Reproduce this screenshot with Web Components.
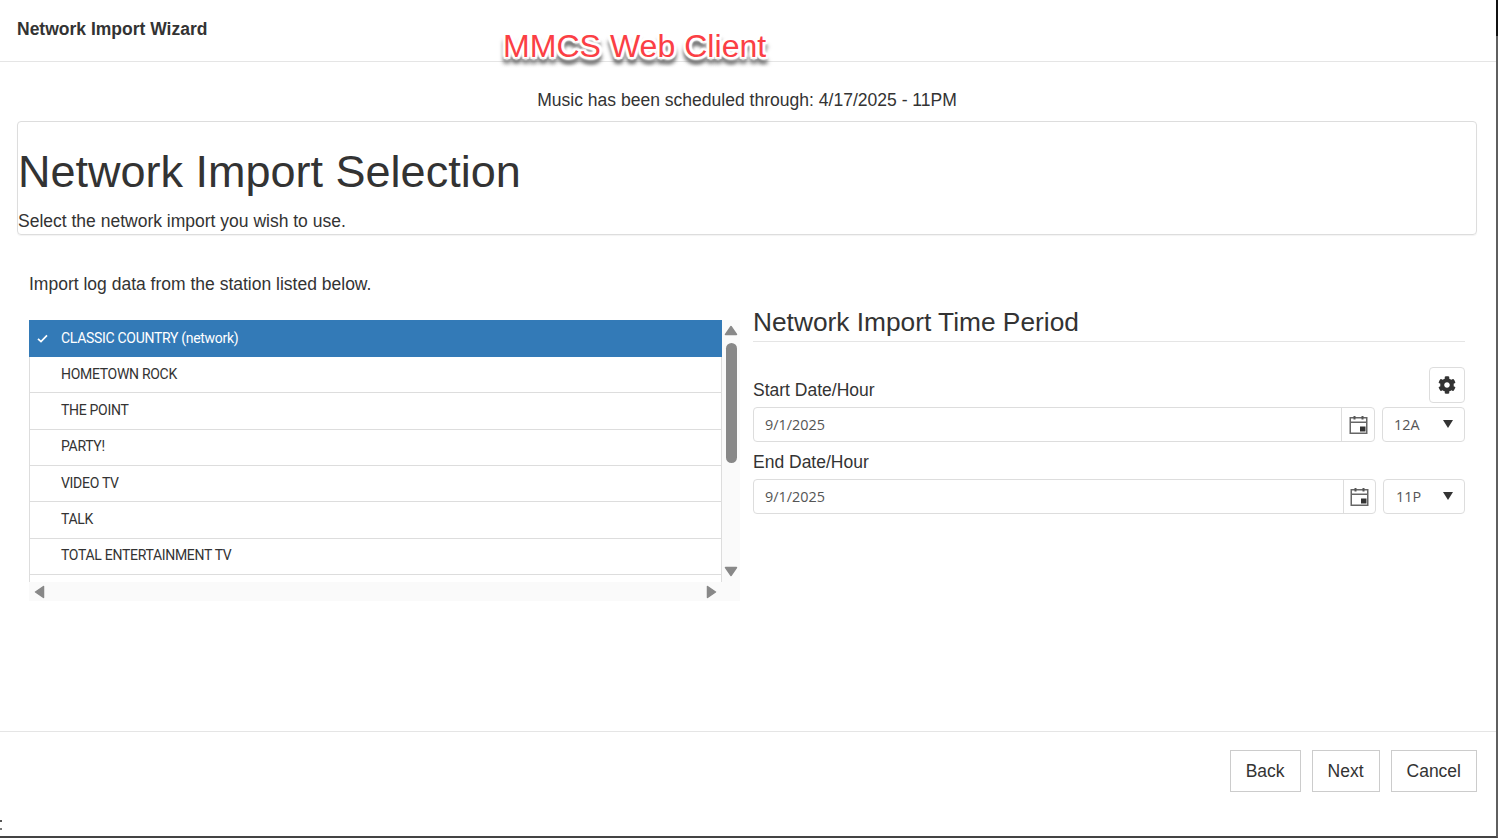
<!DOCTYPE html>
<html lang="en">
    <head>
        <meta charset="utf-8" />
        <title>Network Import Wizard</title>
        <style type="text/css">
            html,
            body {
                margin: 0;
                background: #fff;
                font-family: "Liberation Sans", Arial, sans-serif;
                color: #333;
            }
        </style>
    </head>
    <body>
        <import-wizard>
            <wizard-header slot="header" title-text="Network Import Wizard"></wizard-header>
            <span slot="status">Music has been scheduled through: 4/17/2025 - 11PM</span>
            <intro-card slot="intro" heading="Network Import Selection">Select the network import you wish to use.</intro-card>
            <station-panel slot="left" hint="Import log data from the station listed below.">
                <station-row selected>CLASSIC COUNTRY (network)</station-row>
                <station-row>HOMETOWN ROCK</station-row>
                <station-row>THE POINT</station-row>
                <station-row>PARTY!</station-row>
                <station-row>VIDEO TV</station-row>
                <station-row>TALK</station-row>
                <station-row>TOTAL ENTERTAINMENT TV</station-row>
                <station-row></station-row>
            </station-panel>
            <period-panel slot="right" heading="Network Import Time Period">
                <date-hour label="Start Date/Hour" date="9/1/2025" hour="12A" gear></date-hour>
                <date-hour label="End Date/Hour" date="9/1/2025" hour="11P" wide></date-hour>
            </period-panel>
            <wizard-button slot="footer">Back</wizard-button>
            <wizard-button slot="footer">Next</wizard-button>
            <wizard-button slot="footer">Cancel</wizard-button>
        </import-wizard>

        <script type="text/javascript">
            function shadow(el, html) {
                el.attachShadow({ mode: "open" }).innerHTML = html;
            }

            class ImportWizard extends HTMLElement {
                connectedCallback() {
                    shadow(this, `<style>
                        :host { display: flex; flex-direction: column; position: relative; box-sizing: border-box;
                            width: 1498px; height: 838px; background: #fff;
                            border-right: 2px solid #5f5f5f; border-bottom: 2px solid #444; }
                        .corner { position: absolute; top: 0; right: -2px; width: 2px; height: 36px; background: #111; }
                        .brand { position: absolute; left: 503px; top: 27px; font-size: 32.1px; line-height: 38px; color: #fb3f45;
                            white-space: nowrap;
                            text-shadow: 1px 0 1px #fff, -1px 0 1px #fff, 0 1px 1px #fff, 0 -1px 1px #fff, 2px 2px 1px #fff, -2px 2px 1px #fff, 2px -2px 1px #fff, -2px -2px 1px #fff, 3px 0 2px #fff, -3px 0 2px #fff, 0 3px 2px #fff, 0 -3px 2px #fff, 0 6px 4px #666, 2px 6px 4px #666, -2px 6px 4px #666; }
                        .status { height: 59px; box-sizing: border-box; padding: 0 2px 11px 0; display: flex; align-items: flex-end; justify-content: center; font-size: 17.55px; line-height: 20px; }
                        .body { flex: 1; padding: 0 19px 0 17px; }
                        .columns { display: grid; grid-template-columns: 711px 712px; column-gap: 13px; padding: 39px 0 0 12px; }
                        .foot { height: 105px; box-sizing: border-box; border-top: 1px solid #e5e5e5; padding: 18px 19px 0 0; display: flex; justify-content: flex-end; gap: 11px; align-items: flex-start; }
                        .dots { position: absolute; left: 0; top: 820px; width: 2px; height: 2px; background: #555; box-shadow: 0 8px 0 #777; }
                    </style>
                    <slot name="header"></slot>
                    <div class="status"><slot name="status"></slot></div>
                    <div class="body">
                        <slot name="intro"></slot>
                        <div class="columns"><slot name="left"></slot><slot name="right"></slot></div>
                    </div>
                    <div class="foot"><slot name="footer"></slot></div>
                    <div class="brand">MMCS Web Client</div>
                    <div class="corner"></div>
                    <div class="dots"></div>`);
                }
            }
            customElements.define("import-wizard", ImportWizard);

            class WizardHeader extends HTMLElement {
                connectedCallback() {
                    shadow(this, `<style>
                        :host { display: flex; align-items: center; box-sizing: border-box; height: 62px; padding: 0 17px 2px;
                            border-bottom: 1px solid #e5e5e5; font-size: 17.5px; font-weight: bold; color: #333; }
                    </style>${this.getAttribute("title-text")}`);
                }
            }
            customElements.define("wizard-header", WizardHeader);

            class IntroCard extends HTMLElement {
                connectedCallback() {
                    shadow(this, `<style>
                        :host { display: block; box-sizing: border-box; height: 114px; border: 1px solid #ddd; border-radius: 4px;
                            box-shadow: 0 1px 1px rgba(0,0,0,.05); }
                        h1 { margin: 22px 0 0; font-size: 45px; line-height: 56px; font-weight: normal; color: #333; }
                        p { margin: 11px 0 0; font-size: 17.5px; line-height: 20px; }
                    </style><h1>${this.getAttribute("heading")}</h1><p><slot></slot></p>`);
                }
            }
            customElements.define("intro-card", IntroCard);

            class StationPanel extends HTMLElement {
                connectedCallback() {
                    shadow(this, `<style>
                        :host { display: block; }
                        .hint { font-size: 17.5px; line-height: 20px; margin-bottom: 26px; }
                        .box { display: grid; grid-template-columns: 693px 18px; grid-template-rows: 262px 19px; background: #fafafa; }
                        .list { overflow: hidden; background: #fff; }
                        .vbar { display: flex; flex-direction: column; align-items: center; }
                        .hbar { grid-column: 1 / 3; display: flex; justify-content: space-between; align-items: center; padding: 0 23px 0 5px; }
                        svg { display: block; fill: #888; stroke: #888; stroke-width: 1.5; stroke-linejoin: round; }
                        .up { margin-top: 5px; }
                        .thumb { width: 11px; height: 120px; margin-top: 7px; border-radius: 6px; background: #888; }
                        .down { margin-top: 103px; }
                    </style>
                    <div class="hint">${this.getAttribute("hint")}</div>
                    <div class="box">
                        <div class="list"><slot></slot></div>
                        <div class="vbar">
                            <svg class="up" width="14" height="11" viewBox="0 0 14 11"><path d="M7 1.5 12.5 9.5H1.5z"/></svg>
                            <div class="thumb"></div>
                            <svg class="down" width="14" height="11" viewBox="0 0 14 11"><path d="M7 9.5 12.5 1.5H1.5z"/></svg>
                        </div>
                        <div class="hbar">
                            <svg width="11" height="14" viewBox="0 0 11 14"><path d="M1.5 7 9.5 1.5V12.5z"/></svg>
                            <svg width="11" height="14" viewBox="0 0 11 14"><path d="M9.5 7 1.5 1.5V12.5z"/></svg>
                        </div>
                    </div>`);
                }
            }
            customElements.define("station-panel", StationPanel);

            class StationRow extends HTMLElement {
                connectedCallback() {
                    const selected = this.hasAttribute("selected");
                    shadow(this, `<style>
                        :host { display: flex; align-items: center; box-sizing: border-box; height: 36.33px; padding-bottom: 2px;
                            font: 14px/20px Roboto, sans-serif; color: #333; border: 1px solid #ddd; border-width: 0 1px 1px; white-space: nowrap; letter-spacing: -.3px; }
                        :host([selected]) { height: 37px; background: #337ab7; color: #fff; border: 0; }
                        .tick { width: 31px; flex: none; padding: 2px 0 0 7px; box-sizing: border-box; }
                        :host([selected]) .tick { width: 32px; padding-left: 8px; }
                        svg { display: block; }
                    </style>
                    <div class="tick">${selected ? '<svg width="11" height="9" viewBox="0 0 11 9"><path d="M1 4.8 4 7.6 10 1.4" fill="none" stroke="#fff" stroke-width="1.7"/></svg>' : ""}</div>
                    <slot></slot>`);
                }
            }
            customElements.define("station-row", StationRow);

            class PeriodPanel extends HTMLElement {
                connectedCallback() {
                    shadow(this, `<style>
                        :host { display: block; }
                        h2 { margin: 0 0 25px; padding: 32px 0 3px; font-size: 26.3px; line-height: 32px; font-weight: normal; color: #333; border-bottom: 1px solid #e5e5e5; }
                    </style><h2>${this.getAttribute("heading")}</h2><slot></slot>`);
                }
            }
            customElements.define("period-panel", PeriodPanel);

            class DateHour extends HTMLElement {
                connectedCallback() {
                    const wide = this.hasAttribute("wide");
                    const gear = this.hasAttribute("gear");
                    const gearIcon = `<svg width="18" height="18" viewBox="0 0 512 512"><path fill="#333" d="M487.4 315.7l-42.6-24.6c4.3-23.2 4.3-47 0-70.2l42.6-24.6c4.9-2.8 7.1-8.6 5.5-14-11.1-35.6-30-67.8-54.7-94.6-3.8-4.1-10-5.1-14.8-2.3L380.8 110c-17.9-15.4-38.5-27.3-60.8-35.1V25.8c0-5.6-3.9-10.5-9.4-11.7-36.7-8.2-74.3-7.8-109.2 0-5.5 1.2-9.4 6.1-9.4 11.7V75c-22.2 7.9-42.8 19.8-60.8 35.1L88.7 85.5c-4.9-2.8-11-1.9-14.8 2.3-24.7 26.7-43.6 58.9-54.7 94.6-1.7 5.4.6 11.2 5.5 14L67.3 221c-4.3 23.2-4.3 47 0 70.2l-42.6 24.6c-4.9 2.8-7.1 8.6-5.5 14 11.1 35.6 30 67.8 54.7 94.6 3.8 4.1 10 5.1 14.8 2.3l42.6-24.6c17.9 15.4 38.5 27.3 60.8 35.1v49.2c0 5.6 3.9 10.5 9.4 11.7 36.7 8.2 74.3 7.8 109.2 0 5.5-1.2 9.4-6.1 9.4-11.7v-49.2c22.2-7.9 42.8-19.8 60.8-35.1l42.6 24.6c4.9 2.8 11 1.9 14.8-2.3 24.7-26.7 43.6-58.9 54.7-94.6 1.5-5.5-.7-11.3-5.6-14.1zM256 336c-44.1 0-80-35.9-80-80s35.9-80 80-80 80 35.9 80 80-35.9 80-80 80z"/></svg>`;
                    shadow(this, `<style>
                        :host { display: block; font-size: 17.5px; color: #333; }
                        .top { display: flex; justify-content: space-between; align-items: flex-end; height: ${gear ? 40 : 37}px; }
                        .label { line-height: 20px; padding-bottom: 7px; }
                        .gear { width: 36px; height: 36px; box-sizing: border-box; border: 1px solid #ddd; border-radius: 4px; display: flex; align-items: center; justify-content: center; margin-bottom: 4px; }
                        .row { display: flex; gap: 7px; height: 35px; font: 14.4px "Open Sans", sans-serif; color: #555; }
                        .date { flex: 1; display: flex; box-sizing: border-box; border: 1px solid #ddd; border-radius: 4px; }
                        .value { flex: 1; padding-left: 11px; line-height: 33px; }
                        .cal { width: ${wide ? 31 : 32}px; border-left: 1px solid #ddd; display: flex; align-items: center; justify-content: center; }
                        .hour { width: ${wide ? 82 : 83}px; box-sizing: border-box; border: 1px solid #ddd; border-radius: 4px; display: flex; align-items: center; justify-content: space-between; padding: 0 11px 0 ${wide ? 12 : 11}px; }
                        .arrow { width: 0; height: 0; border: 5.5px solid transparent; border-bottom: 0; border-top: 8px solid #333; margin-top: -2px; }
                        svg { display: block; }
                    </style>
                    <div class="top"><div class="label">${this.getAttribute("label")}</div>${gear ? `<div class="gear">${gearIcon}</div>` : ""}</div>
                    <div class="row">
                        <div class="date"><div class="value">${this.getAttribute("date")}</div>
                            <div class="cal"><svg width="19" height="20" viewBox="0 0 19 20"><path d="M1.25 2.75h16.5v15.5H1.25z" fill="#fff" stroke="#666" stroke-width="1.5"/><path d="M1.25 7.25h16.5" stroke="#666" stroke-width="1.5"/><path d="M5.5 1v3.5M13.5 1v3.5" stroke="#555" stroke-width="2"/><path d="M11 11.5h5.5v5H11z" fill="#333"/></svg></div>
                        </div>
                        <div class="hour"><span>${this.getAttribute("hour")}</span><span class="arrow"></span></div>
                    </div>`);
                }
            }
            customElements.define("date-hour", DateHour);

            class WizardButton extends HTMLElement {
                connectedCallback() {
                    shadow(this, `<style>
                        :host { display: inline-flex; align-items: center; box-sizing: border-box; height: 42px; padding: 0 15px;
                            border: 1px solid #ccc; font-size: 17.5px; color: #333; background: #fff; }
                    </style><slot></slot>`);
                }
            }
            customElements.define("wizard-button", WizardButton);
        </script>
    </body>
</html>
